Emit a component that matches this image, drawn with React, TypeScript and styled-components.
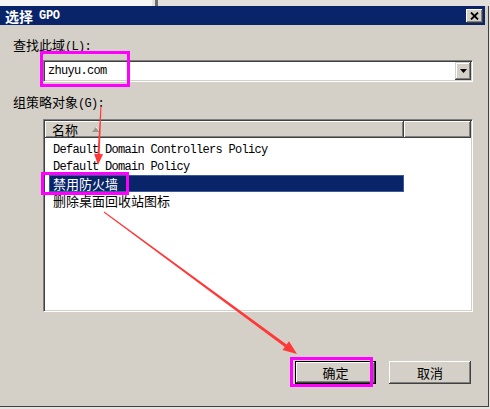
import React from "react";
import styled, { createGlobalStyle } from "styled-components";

const Global = createGlobalStyle`
  html, body { margin: 0; padding: 0; background: #d4d0c8; }
  body { width: 490px; height: 409px; overflow: hidden; font-family: "Noto Sans CJK SC", "Liberation Sans", sans-serif; }
`;

const Screen = styled.div`
  position: relative;
  width: 490px;
  height: 409px;
  display: flex;
  flex-direction: column;
  background: #e6e4e0;
  overflow: hidden;
`;

const TopStrip = styled.div`
  height: 6px;
  flex: none;
  display: flex;
`;
const StripWhite = styled.div`
  width: 152px;
  background: #f6f6f6;
`;
const StripMark = styled.div`
  width: 3px;
  margin-left: 3px;
  background: #6e6e6e;
`;
const StripRest = styled.div`
  flex: 1;
  background: #e2e0dc;
`;

const Window = styled.div`
  width: 489px;
  height: 401px;
  flex: none;
  box-sizing: border-box;
  background: #d4d0c8;
  border-right: 1px solid #404040;
  border-bottom: 1px solid #404040;
  padding-right: 3px;
  display: flex;
  flex-direction: column;
`;

const TitleBar = styled.div`
  height: 19px;
  flex: none;
  background: #0a246a;
  display: flex;
  align-items: center;
  justify-content: space-between;
  padding: 0 2px 0 5px;
`;

const TitleText = styled.div`
  color: #fff;
  font-weight: bold;
  font-size: 14px;
  height: 19px;
  display: flex;
  align-items: center;
  gap: 6px;
`;

const TitleLatin = styled.span`
  font-family: "Liberation Mono", monospace;
  font-size: 12px;
  font-weight: bold;
  letter-spacing: -0.3px;
`;

const CloseButton = styled.div`
  width: 17px;
  height: 14px;
  box-sizing: border-box;
  background: #d4d0c8;
  display: flex;
  align-items: center;
  justify-content: center;
  box-shadow: inset -1px -1px #404040, inset 1px 1px #fff, inset -2px -2px #808080;
`;

const Label = styled.div`
  margin: 12px 0 0 13px;
  height: 16px;
  line-height: 16px;
  flex: none;
  font-size: 13px;
  color: #000;
  white-space: nowrap;
`;

const Latin = styled.span`
  font-family: "Liberation Mono", monospace;
  font-size: 12px;
  letter-spacing: -0.7px;
  vertical-align: baseline;
`;

const Sunken = styled.div`
  box-sizing: border-box;
  flex: none;
  background: #fff;
  border: 1px solid;
  border-color: #808080 #fff #fff #808080;
  box-shadow: inset 1px 1px #404040, inset -1px -1px #d4d0c8;
  padding: 1px;
`;

const Combo = styled(Sunken)`
  margin: 7px 0 0 43px;
  width: 430px;
  height: 22px;
  display: flex;
  align-items: center;
  justify-content: space-between;
`;

const ComboText = styled.div`
  padding-left: 3px;
  font-family: "Liberation Mono", monospace;
  font-size: 12px;
  letter-spacing: -0.7px;
  color: #000;
`;

const DropButton = styled.div`
  width: 16px;
  height: 18px;
  box-sizing: border-box;
  background: #d4d0c8;
  box-shadow: inset -1px -1px #404040, inset 1px 1px #d4d0c8, inset -2px -2px #808080, inset 2px 2px #fff;
  display: flex;
  align-items: center;
  justify-content: center;
`;

const ListBox = styled(Sunken)`
  margin: 9px 0 0 43px;
  width: 430px;
  height: 193px;
  display: flex;
  flex-direction: column;
`;

const Header = styled.div`
  display: flex;
  height: 17px;
  flex: none;
`;

const HeaderCell = styled.div<{ $w: number }>`
  width: ${(p) => p.$w}px;
  height: 17px;
  box-sizing: border-box;
  background: #d4d0c8;
  box-shadow: inset -1px -1px #404040, inset 1px 1px #fff, inset -2px -2px #808080;
  display: flex;
  align-items: center;
  padding-left: 7px;
  gap: 14px;
  font-size: 13px;
  color: #000;
`;

const Rows = styled.div`
  margin: 3px 0 0 4px;
  display: flex;
  flex-direction: column;
`;

const Row = styled.div<{ $selected?: boolean }>`
  width: 355px;
  height: 17px;
  flex: none;
  box-sizing: border-box;
  padding-left: 3px;
  font-size: 13px;
  white-space: nowrap;
  color: ${(p) => (p.$selected ? "#fff" : "#000")};
  background: ${(p) => (p.$selected ? "#0a246a" : "transparent")};
  border: 1px solid ${(p) => (p.$selected ? "#3a5a9a" : "transparent")};
  display: flex;
  align-items: center;
`;

const ButtonRow = styled.div`
  margin-top: 49px;
  display: flex;
  justify-content: flex-end;
  gap: 13px;
  padding-right: 14px;
`;

const Button = styled.div<{ $default?: boolean; $w: number }>`
  width: ${(p) => p.$w}px;
  height: 23px;
  box-sizing: border-box;
  background: #d4d0c8;
  display: flex;
  align-items: center;
  justify-content: center;
  font-size: 13px;
  color: #000;
  border: ${(p) => (p.$default ? "1px solid #000" : "none")};
  box-shadow: inset -1px -1px #404040, inset 1px 1px #fff, inset -2px -2px #808080;
`;

const Mark = styled.div<{ $x: number; $y: number; $w: number; $h: number }>`
  position: absolute;
  left: ${(p) => p.$x}px;
  top: ${(p) => p.$y}px;
  width: ${(p) => p.$w}px;
  height: ${(p) => p.$h}px;
  box-sizing: border-box;
  border: 3px solid #ff00ff;
  pointer-events: none;
`;

const Overlay = styled.svg`
  position: absolute;
  left: 0;
  top: 0;
  width: 490px;
  height: 409px;
  pointer-events: none;
`;

function arrowPoints(
  x0: number,
  y0: number,
  x1: number,
  y1: number,
  w0: number,
  w1: number,
  hl: number,
  hw: number
) {
  const dx = x1 - x0;
  const dy = y1 - y0;
  const L = Math.sqrt(dx * dx + dy * dy);
  const ux = dx / L;
  const uy = dy / L;
  const nx = -uy;
  const ny = ux;
  const bx = x1 - ux * hl;
  const by = y1 - uy * hl;
  const pts = [
    [x0 + (nx * w0) / 2, y0 + (ny * w0) / 2],
    [bx + (nx * w1) / 2, by + (ny * w1) / 2],
    [bx + nx * hw, by + ny * hw],
    [x1, y1],
    [bx - nx * hw, by - ny * hw],
    [bx - (nx * w1) / 2, by - (ny * w1) / 2],
    [x0 - (nx * w0) / 2, y0 - (ny * w0) / 2],
  ];
  return pts.map((p) => `${p[0].toFixed(1)},${p[1].toFixed(1)}`).join(" ");
}

export default function App() {
  return (
    <>
      <Global />
      <Screen>
        <TopStrip>
          <StripWhite />
          <StripMark />
          <StripRest />
        </TopStrip>
        <Window>
          <TitleBar>
            <TitleText>
              选择<TitleLatin>GPO</TitleLatin>
            </TitleText>
            <CloseButton>
              <svg width="9" height="8" viewBox="0 0 9 8">
                <path d="M1 0.5 L8 7.5 M8 0.5 L1 7.5" stroke="#000" strokeWidth="1.8" />
              </svg>
            </CloseButton>
          </TitleBar>

          <Label>
            查找此域<Latin>(L):</Latin>
          </Label>
          <Combo>
            <ComboText>zhuyu.com</ComboText>
            <DropButton>
              <svg width="7" height="4" viewBox="0 0 7 4">
                <path d="M0 0 H7 L3.5 4 Z" fill="#000" />
              </svg>
            </DropButton>
          </Combo>

          <Label>
            组策略对象<Latin>(G):</Latin>
          </Label>
          <ListBox>
            <Header>
              <HeaderCell $w={359}>
                名称
                <svg width="8" height="5" viewBox="0 0 8 5">
                  <path d="M4 0 L8 5 H0 Z" fill="#9a968e" />
                  <path d="M4 0 L8 5" stroke="#fff" strokeWidth="0.8" />
                </svg>
              </HeaderCell>
              <HeaderCell $w={67} />
            </Header>
            <Rows>
              <Row>
                <Latin>Default Domain Controllers Policy</Latin>
              </Row>
              <Row>
                <Latin>Default Domain Policy</Latin>
              </Row>
              <Row $selected>禁用防火墙</Row>
              <Row>删除桌面回收站图标</Row>
            </Rows>
          </ListBox>

          <ButtonRow>
            <Button $default $w={81}>
              确定
            </Button>
            <Button $w={82}>取消</Button>
          </ButtonRow>
        </Window>

        <Mark $x={40} $y={51} $w={90} $h={36} />
        <Mark $x={41} $y={172} $w={88} $h={23} />
        <Mark $x={290} $y={357} $w={83} $h={30} />

        <Overlay viewBox="0 0 490 409">
          <polygon points={arrowPoints(101, 106, 98, 165, 1, 2.2, 11, 4.5)} fill="#ff3838" />
          <polygon points={arrowPoints(104, 212, 297, 354, 1, 3, 14, 5.5)} fill="#ff3838" />
        </Overlay>
      </Screen>
    </>
  );
}
